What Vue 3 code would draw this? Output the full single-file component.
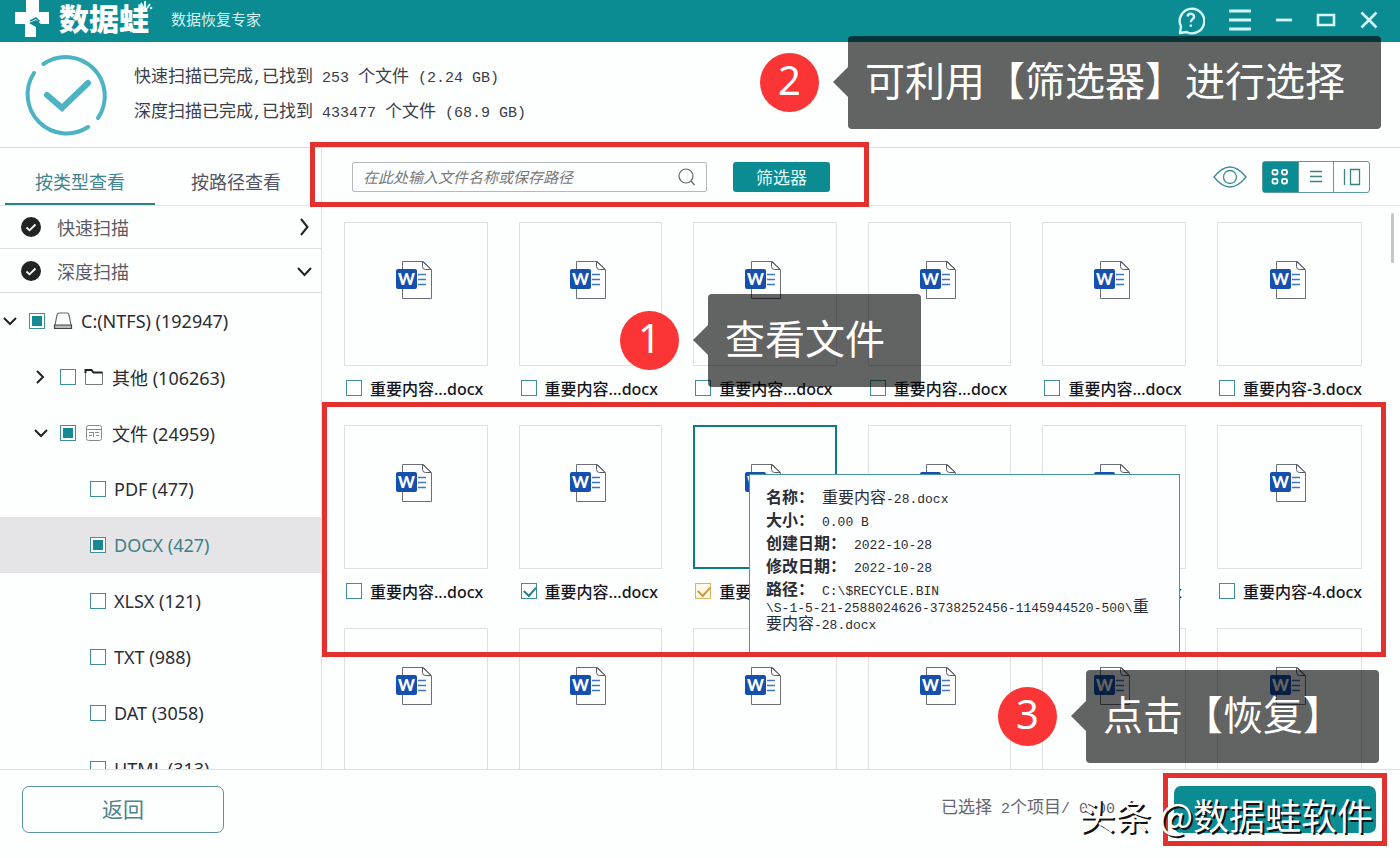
<script setup>
const leaves = [
  { name: 'PDF (477)' },
  { name: 'DOCX (427)', active: true },
  { name: 'XLSX (121)' },
  { name: 'TXT (988)' },
  { name: 'DAT (3058)' },
  { name: 'HTML (313)' },
]

const short = '重要内容...docx'
const files = [
  { name: short }, { name: short }, { name: short }, { name: short }, { name: short }, { name: '重要内容-3.docx' },
  { name: short }, { name: short, checked: true }, { name: short, checked: true, current: true }, { name: short }, { name: short }, { name: '重要内容-4.docx' },
  { name: short }, { name: short }, { name: short }, { name: short }, { name: short }, { name: short },
]
</script>

<template>
  <div class="page">
    <header class="titlebar">
      <svg class="logo" width="36" height="38" viewBox="0 0 36 38">
        <path d="M12 0h13v12h10v12h-8l-5-4-7 3 7 4v10H11V24H1V12h11z" fill="#fff" />
        <path d="M16 21l6-3 3 3-6 2 5 5" fill="none" stroke="#0b8c92" stroke-width="1.5" />
      </svg>
      <h1>数据蛙</h1>
      <svg class="sprout" width="14" height="12" viewBox="0 0 14 12">
        <path d="M5 9L2 3M6 8V1M8 8l3-4" stroke="#d8f7f7" stroke-width="2" fill="none" />
        <circle cx="12" cy="8" r="1.3" fill="#d8f7f7" />
      </svg>
      <span class="subtitle">数据恢复专家</span>
      <div class="winbtns">
        <button type="button" aria-label="帮助">
          <svg width="30" height="30" viewBox="0 0 30 30">
            <path d="M5 28l1-6.500A12.300 12.300 0 1 1 11.500 27z" stroke-linejoin="round" />
            <path d="M12.500 11.500c.5-4 7-3.600 6.500.5-.3 2.200-3.200 2.400-3.200 5.200M15.800 19.500v2.200" />
          </svg>
        </button>
        <button type="button" aria-label="菜单">
          <svg width="24" height="24" viewBox="0 0 24 24"><path d="M1 3h22M1 12h22M1 21h22" stroke-width="2.800" /></svg>
        </button>
        <button type="button" aria-label="最小化">
          <svg width="18" height="20" viewBox="0 0 18 20"><path d="M1 10h16" stroke-width="2.800" /></svg>
        </button>
        <button type="button" aria-label="最大化">
          <svg width="20" height="20" viewBox="0 0 20 20"><path d="M2 5h16v10H2z" stroke-width="2.600" /></svg>
        </button>
        <button type="button" aria-label="关闭">
          <svg width="20" height="20" viewBox="0 0 20 20"><path d="M2.500 2.500l15 15M17.500 2.500l-15 15" stroke-width="2.600" /></svg>
        </button>
      </div>
    </header>

    <section class="status">
      <svg width="90" height="90" viewBox="0 0 90 90" fill="none" stroke="#4bb3c3" stroke-width="4" stroke-linecap="round">
        <path d="M22.500 14A39 39 0 0 1 77 68" />
        <path d="M67 77A39 39 0 0 1 13 23" />
        <path d="M26 45L41 58L67 33" stroke-width="6" />
      </svg>
      <div class="status-text">
        <p>快速扫描已完成<span class="mono">,</span>已找到<span class="mono"> 253 </span>个文件<span class="mono"> (2.24 GB)</span></p>
        <p>深度扫描已完成<span class="mono">,</span>已找到<span class="mono"> 433477 </span>个文件<span class="mono"> (68.9 GB)</span></p>
      </div>
    </section>

    <main class="main">
      <aside class="sidebar">
        <nav class="tabs">
          <button type="button" class="tab on">按类型查看</button>
          <button type="button" class="tab">按路径查看</button>
        </nav>
        <button v-for="(s, i) in ['快速扫描', '深度扫描']" :key="s" type="button" class="scan">
          <svg width="20" height="20" viewBox="0 0 20 20"><circle cx="10" cy="10" r="10" fill="#232326" /><path d="M5.500 10.500l3 2.800 6-5.800" fill="none" stroke="#fff" stroke-width="1.800" /></svg>
          <span>{{ s }}</span>
          <svg class="arrow" width="16" height="20" viewBox="0 0 16 20" fill="none" stroke="#222" stroke-width="2">
            <path v-if="i === 0" d="M4 2l6.500 8L4 18" />
            <path v-else d="M1 7l6.500 7L14 7" />
          </svg>
        </button>
        <div class="tree">
          <div class="node lvl0">
            <svg width="16" height="16" viewBox="0 0 16 16" class="tw"><path d="M2 5l6 6 6-6" /></svg>
            <label>
              <input type="checkbox" class="box partial" />
              <svg width="20" height="20" viewBox="0 0 20 20" fill="none" stroke="#666" stroke-width="1.200"><path d="M2 14L4 4q.4-2 2-2h8q1.600 0 2 2l2 10" /><path d="M1.500 14h17v3.500h-17z" fill="#bbb" stroke="#444" /></svg>
              <span>C:(NTFS) (192947)</span>
            </label>
          </div>
          <div class="node lvl1">
            <svg width="16" height="16" viewBox="0 0 16 16" class="tw"><path d="M4 2l6 6-6 6" /></svg>
            <label>
              <input type="checkbox" class="box" />
              <svg width="20" height="20" viewBox="0 0 20 20" fill="none" stroke="#777"><path d="M1.500 17.500v-14h6l2 2h9v12z" /><path d="M1.500 6V3h6l2 2.500h9" stroke="#222" stroke-width="2" /></svg>
              <span>其他 (106263)</span>
            </label>
          </div>
          <div class="node lvl1">
            <svg width="16" height="16" viewBox="0 0 16 16" class="tw"><path d="M2 5l6 6 6-6" /></svg>
            <label>
              <input type="checkbox" class="box partial" />
              <svg width="20" height="20" viewBox="0 0 20 20" fill="none" stroke="#888"><rect x="2.500" y="2.500" width="15" height="15" rx="2" /><path d="M3 6.500h14M5 9.500h4M11 9.500h4M5 12.500h3M9.500 9v5M12 12.500h3" /></svg>
              <span>文件 (24959)</span>
            </label>
          </div>
          <div v-for="l in leaves" :key="l.name" class="node lvl2" :class="{ active: l.active }">
            <label>
              <input type="checkbox" class="box" :class="{ partial: l.active }" />
              <span>{{ l.name }}</span>
            </label>
          </div>
        </div>
      </aside>

      <section class="content">
        <div class="toolbar">
          <div class="search">
            <input type="text" aria-label="搜索文件" placeholder="在此处输入文件名称或保存路径" />
            <svg width="18" height="18" viewBox="0 0 18 18" fill="none" stroke="#666" stroke-width="1.200"><circle cx="8" cy="8" r="7" /><path d="M13 13l3.500 4" /></svg>
          </div>
          <button type="button" class="filter">筛选器</button>
          <div class="mark mark-filter"></div>
          <div class="views">
            <button type="button" class="eye" aria-label="预览">
              <svg width="34" height="24" viewBox="0 0 34 24" fill="none" stroke="#3f8d96" stroke-width="1.300"><path d="M1 12Q9 2 17 2t16 10Q25 22 17 22T1 12z" /><circle cx="17" cy="12" r="6.500" /></svg>
            </button>
            <div class="seg">
              <button type="button" class="on" aria-label="网格"><svg width="20" height="20" viewBox="0 0 20 20" fill="none" stroke="#fff" stroke-width="1.800"><rect x="2.500" y="3" width="5" height="4.500" rx="1.500" /><rect x="12" y="3" width="5" height="4.500" rx="1.500" /><rect x="2.500" y="12" width="5" height="4.500" rx="1.500" /><rect x="12" y="12" width="5" height="4.500" rx="1.500" /></svg></button>
              <button type="button" aria-label="列表"><svg width="20" height="20" viewBox="0 0 20 20" stroke="#3f8088" stroke-width="1.300"><path d="M4 4.500h12M4 9.500h12M4 14.500h12" /></svg></button>
              <button type="button" aria-label="详情"><svg width="20" height="20" viewBox="0 0 20 20" fill="none" stroke="#3f8088" stroke-width="1.300"><path d="M2.500 2v16M8.500 2.500h9v15h-9z" /></svg></button>
            </div>
          </div>
        </div>

        <div class="files">
          <div class="grid">
            <article v-for="(f, i) in files" :key="i" class="file">
              <div class="thumb" :class="{ current: f.current }">
                <svg width="40" height="40" viewBox="0 0 40 40">
                  <path d="M6.500 1.500h21l8 8v29h-29z" fill="#fff" stroke="#6b6f7a" />
                  <path d="M26.500 1.500v5q0 3 3 3h5.500z" fill="#fff" stroke="#555a66" />
                  <path d="M22 14.500h8M22 19.500h8M22 24.500h8" stroke="#3d77bd" stroke-width="1.500" />
                  <rect x="0" y="9" width="21" height="20" rx="2" fill="#1550ae" />
                  <text x="10.500" y="25" text-anchor="middle" font-family="Lato, sans-serif" font-weight="900" font-size="16" fill="#fff">W</text>
                </svg>
              </div>
              <label>
                <input type="checkbox" class="box" :class="{ gold: f.current }" :checked="f.checked" />
                <span>{{ f.name }}</span>
              </label>
            </article>
          </div>
          <div class="tip">
            <p><b>名称：</b><span>重要内容</span><span class="mono">-28.docx</span></p>
            <p><b>大小：</b><span class="mono">0.00 B</span></p>
            <p><b>创建日期：</b><span class="mono">2022-10-28</span></p>
            <p><b>修改日期：</b><span class="mono">2022-10-28</span></p>
            <p><b>路径：</b><span class="mono">C:\$RECYCLE.BIN</span><br /><span class="mono">\S-1-5-21-2588024626-3738252456-1145944520-500\</span>重<br />要内容<span class="mono">-28.docx</span></p>
          </div>
          <div class="mark mark-files"></div>
          <div class="thumbbar"></div>
        </div>
      </section>
    </main>

    <footer class="footer">
      <button type="button" class="back">返回</button>
      <span class="count">已选择<span class="mono"> 2</span>个项目<span class="mono">/ 0.00</span></span>
      <div class="recover-wrap">
        <button type="button" class="recover" aria-label="恢复"></button>
      </div>
      <span class="brand">头条 @数据蛙软件</span>
    </footer>

    <div class="step s1"><span class="dot">1</span><span class="bubble">查看文件</span></div>
    <div class="step s2"><span class="dot">2</span><span class="bubble">可利用【筛选器】进行选择</span></div>
    <div class="step s3"><span class="dot">3</span><span class="bubble">点击【恢复】</span></div>
  </div>
</template>

<style>
body {
  margin: 0;
}
</style>

<style scoped>
* {
  box-sizing: border-box;
}
.page {
  position: relative;
  display: flex;
  flex-direction: column;
  height: 100vh;
  overflow: hidden;
  background: #fdfefe;
  color: #2c2c34;
  font-family: "Noto Sans", "Noto Sans CJK SC", sans-serif;
  font-size: 17px;
}
button {
  margin: 0;
  padding: 0;
  border: 0;
  background: none;
  color: inherit;
  font: inherit;
}
svg {
  display: block;
  flex: none;
}
p {
  margin: 0;
}
.mono {
  font-family: "Liberation Mono", monospace;
  font-size: 15px;
  line-height: 1;
  white-space: pre;
}
.titlebar {
  display: flex;
  align-items: center;
  flex: none;
  height: 42px;
  padding: 0 21px 0 14px;
  background: #0b8c92;
  color: #fff;
}
.logo {
  align-self: flex-start;
}
.titlebar h1 {
  margin: 0 0 4px 9px;
  font-size: 30px;
  line-height: 38px;
  font-weight: 900;
}
.sprout {
  align-self: flex-start;
  margin-left: -10px;
}
.subtitle {
  margin: 0 0 5px 18px;
  font-size: 15px;
  color: #d8f4f4;
}
.winbtns {
  display: flex;
  align-items: center;
  gap: 23px;
  margin: 0 0 3px auto;
}
.winbtns svg {
  fill: none;
  stroke: #d6f7f8;
  stroke-width: 2.4;
}
.status {
  display: flex;
  align-items: center;
  flex: none;
  gap: 24px;
  height: 106px;
  padding-left: 21px;
  border-bottom: 1px solid #dde1e4;
}
.status-text {
  display: grid;
  gap: 11px;
  line-height: 24px;
  padding-bottom: 2px;
  margin-left: -1px;
  color: #3c3c46;
}
.main {
  display: grid;
  grid-template-columns: 322px 1fr;
  flex: 1;
  min-height: 0;
}
.sidebar {
  display: flex;
  flex-direction: column;
  min-height: 0;
  border-right: 1px solid #dde1e4;
}
.tabs {
  display: flex;
  flex: none;
  height: 58px;
  padding: 0 5px;
  gap: 6px;
  border-bottom: 1px solid #e2e6e8;
}
.tab {
  width: 150px;
  padding-top: 10px;
  font-size: 18px;
  color: #55555f;
  border-bottom: 2px solid transparent;
}
.tab.on {
  color: #3f858f;
  border-color: #2e7f88;
}
.scan {
  display: flex;
  align-items: center;
  flex: none;
  height: 43px;
  padding: 0 8px 0 21px;
  gap: 16px;
  font-size: 18px;
  color: #5a5a66;
  border-bottom: 1px solid #dde1e4;
}
.scan + .scan {
  height: 44px;
}
.arrow {
  margin-left: auto;
}
.tree {
  flex: 1;
  min-height: 0;
  overflow: hidden;
  font-size: 18px;
}
.node {
  display: flex;
  align-items: center;
  height: 56px;
}
.node label {
  display: flex;
  align-items: center;
  gap: 8px;
}
.tw {
  margin-right: 11px;
  fill: none;
  stroke: #222;
  stroke-width: 2;
}
.lvl0 {
  padding-left: 2px;
}
.lvl1 {
  padding-left: 33px;
}
.lvl2 {
  padding-left: 90px;
}
.active {
  color: #3f7f88;
  background: #e5e5e7;
}
.box {
  appearance: none;
  position: relative;
  flex: none;
  width: 16px;
  height: 16px;
  margin: 0;
  border: 1px solid #3f8f98;
  background: #fff;
}
.partial::after {
  content: "";
  position: absolute;
  inset: 2px;
  background: #168a93;
}
.box:checked::after {
  content: "";
  position: absolute;
  left: 4px;
  top: 0;
  width: 6px;
  height: 10px;
  border: solid #2a7f89;
  border-width: 0 2px 2px 0;
  transform: rotate(42deg);
}
.gold {
  border-color: #dcb25e;
  background: #fff8e6;
}
.gold:checked::after {
  border-color: #c79a45;
}
.content {
  display: flex;
  flex-direction: column;
  min-width: 0;
  min-height: 0;
}
.toolbar {
  position: relative;
  display: flex;
  align-items: center;
  flex: none;
  height: 58px;
  padding: 0 30px;
  border-bottom: 1px solid #e2e6e8;
}
.search {
  display: flex;
  align-items: center;
  width: 355px;
  height: 30px;
  padding: 0 10px;
  border: 1px solid #b4b8ba;
  border-radius: 2px;
}
.search input {
  flex: 1;
  min-width: 0;
  padding: 0;
  border: 0;
  outline: 0;
  background: none;
  font-family: "Noto Sans CJK SC", sans-serif;
  font-size: 15px;
  font-style: italic;
}
.search input::placeholder {
  color: #777;
}
.filter {
  width: 97px;
  height: 30px;
  margin-left: 26px;
  border-radius: 3px;
  background: #0b8c92;
  color: #e4fbfb;
}
.mark {
  position: absolute;
  border: 5px solid #e3312f;
  pointer-events: none;
}
.mark-filter {
  left: -12px;
  top: -6px;
  width: 559px;
  height: 65px;
  z-index: 2;
}
.views {
  display: flex;
  align-items: center;
  gap: 15px;
  margin-left: auto;
}
.seg {
  display: flex;
  width: 108px;
  height: 32px;
  border: 1px solid #5f9aa1;
  border-radius: 3px;
}
.seg button {
  display: grid;
  place-items: center;
  flex: 1;
}
.seg button + button {
  border-left: 1px solid #5f9aa1;
}
.seg .on {
  background: #0b8c92;
}
.files {
  position: relative;
  flex: 1;
  min-height: 0;
  overflow: hidden;
}
.grid {
  display: grid;
  grid-template-columns: repeat(6, 1fr);
  gap: 25px 31px;
  padding: 16px 38px 0 22px;
}
.thumb {
  display: flex;
  justify-content: center;
  height: 144px;
  padding-top: 37px;
  border: 1px solid #dfe2e5;
}
.thumb.current {
  padding-top: 36px;
  border: 2px solid #0f7c84;
}
.file label {
  display: flex;
  align-items: center;
  gap: 8px;
  height: 24px;
  margin-top: 10px;
  padding-left: 2px;
  font-size: 16px;
  font-weight: 500;
  color: #15151d;
  white-space: nowrap;
}
.tip {
  position: absolute;
  left: 427px;
  top: 268px;
  display: grid;
  align-content: start;
  gap: 6px;
  width: 431px;
  height: 182px;
  padding: 14px 0 0 16px;
  border: 1px solid #4b95a3;
  background: #fdfeff;
  font-size: 16px;
  line-height: 17px;
  white-space: nowrap;
}
.tip .mono {
  font-size: 13px;
}
.tip b {
  margin-right: 8px;
}
.mark-files {
  left: 0;
  right: 14px;
  top: 196px;
  height: 255px;
}
.thumbbar {
  position: absolute;
  right: 6px;
  top: 7px;
  width: 3px;
  height: 50px;
  border-radius: 2px;
  background: #c4c7c9;
}
.footer {
  position: relative;
  display: flex;
  align-items: center;
  flex: none;
  height: 89px;
  padding: 0 13px 9px 22px;
  border-top: 1px solid #dde1e4;
}
.back {
  width: 202px;
  height: 47px;
  padding-bottom: 4px;
  border: 1px solid #5b939c;
  border-radius: 7px;
  font-size: 21px;
  color: #4e858d;
}
.count {
  margin: 0 48px 8px auto;
  color: #666670;
  white-space: nowrap;
}
.recover-wrap {
  padding: 8px 6px;
  border: 5px solid #e3312f;
}
.recover {
  display: block;
  width: 202px;
  height: 47px;
  border-radius: 7px;
  background: #0b8c92;
}
.brand {
  position: absolute;
  right: 27px;
  top: 18px;
  font-family: "Noto Sans CJK SC", sans-serif;
  font-size: 36px;
  line-height: 52px;
  color: #fff;
  text-shadow: 2px 2px 0 #111;
  white-space: nowrap;
}
.step {
  position: absolute;
  z-index: 3;
  display: flex;
  align-items: center;
  gap: 29px;
  color: #fff;
}
.dot {
  display: grid;
  place-items: center;
  width: 59px;
  height: 59px;
  padding-bottom: 6px;
  border-radius: 50%;
  background: #fb3435;
  font-size: 40px;
  line-height: 50px;
}
.bubble {
  position: relative;
  height: 93px;
  padding: 0 36px 0 17px;
  border-radius: 4px;
  background: rgba(0, 0, 0, 0.61);
  font-family: "Noto Sans CJK SC", sans-serif;
  font-size: 40px;
  line-height: 87px;
  white-space: nowrap;
}
.bubble::before {
  content: "";
  position: absolute;
  right: 100%;
  top: 31px;
  border: solid transparent;
  border-width: 15px 15px 15px 0;
  border-right-color: rgba(0, 0, 0, 0.61);
}
.s1 {
  left: 620px;
  top: 294px;
}
.s2 {
  right: 19px;
  top: 36px;
}
.s3 {
  right: 21px;
  top: 670px;
}
</style>
